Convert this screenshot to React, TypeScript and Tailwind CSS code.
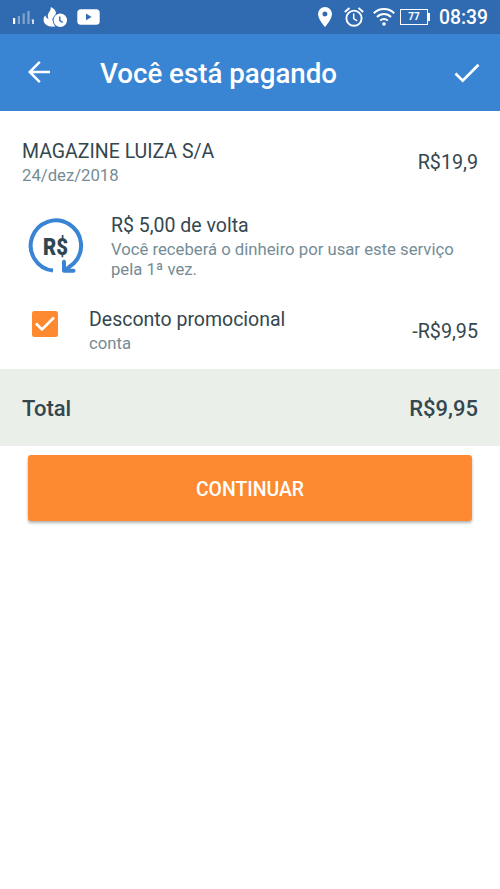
import type { ReactNode } from "react";

function SignalIcon() {
  return (
    <svg width="22" height="16" viewBox="0 0 22 16" fill="#fff">
      <rect x="0" y="9" width="2.2" height="6" />
      <rect x="4.8" y="7" width="2.2" height="8" opacity="0.4" />
      <rect x="9.6" y="4.5" width="2.2" height="10.5" opacity="0.4" />
      <rect x="14.4" y="2" width="2.2" height="13" opacity="0.4" />
      <path d="M18.7 10.4h2.1V15h-1.5v-3.2h-.6z" />
    </svg>
  );
}

function FlameClockIcon() {
  return (
    <svg width="26" height="22" viewBox="0 0 26 22">
      <path
        d="M7.8.9c3.600 1.800 5.800 4.300 5 7.400-.6 2.300-3.400 3.300-3.700 5.700 1.800-.4 3-1.600 3.800-3l3.500-1.100L13.400 20C8 21.900 1.400 19.900.6 14.500c-.3-2.500.6-4.300 1.900-5.100.3 2 1.500 3 3 3.600C4.500 10.500 4.500 8.800 5.800 6.600 7 4.700 8 3 7.800.9z"
        fill="#fff"
      />
      <circle cx="17.300" cy="14.300" r="7.600" fill="#306ab0" />
      <circle cx="17.300" cy="14.300" r="6.700" fill="#fff" />
      <path d="M16.800 10.500v4l2.800 1.800" fill="none" stroke="#306ab0" strokeWidth="1.400" />
    </svg>
  );
}

function YoutubeIcon() {
  return (
    <svg width="23" height="16" viewBox="0 0 23 16">
      <rect x="0.3" y="0.3" width="22.4" height="15.4" rx="3.5" fill="#fff" />
      <path d="M9 4.600v6.600l5.600-3.300z" fill="#306ab0" />
    </svg>
  );
}

function PinIcon() {
  return (
    <svg width="14" height="20" viewBox="0 0 14 20">
      <path
        d="M7 0a7 7 0 0 0-7 7c0 5.200 7 13 7 13s7-7.800 7-13a7 7 0 0 0-7-7zm0 9.500a2.500 2.500 0 1 1 0-5 2.500 2.500 0 0 1 0 5z"
        fill="#fff"
      />
    </svg>
  );
}

function AlarmIcon() {
  return (
    <svg width="20" height="20" viewBox="0 0 20 20" fill="none" stroke="#fff">
      <circle cx="10" cy="11.2" r="7.6" strokeWidth="1.9" />
      <path d="M.8 4.900 5.500 1M19.200 4.900 14.500 1" strokeWidth="1.9" />
      <path d="M9.700 6.500v5.200l3.500 2.200" strokeWidth="1.5" />
    </svg>
  );
}

function WifiIcon() {
  return (
    <svg width="22" height="18" viewBox="0 0 22 18" fill="none" stroke="#fff" strokeWidth="2">
      <path d="M.8 5.300a14.500 14.500 0 0 1 20.400 0M4 9a9.900 9.900 0 0 1 14 0M7.200 12.600a5.400 5.400 0 0 1 7.600 0" />
      <circle cx="11" cy="16" r="1.8" fill="#fff" stroke="none" />
    </svg>
  );
}

function Battery({ level }: { level: number }) {
  return (
    <div className="flex items-center">
      <div className="flex h-4 w-7 items-center justify-center border border-white text-[10px] leading-none font-bold">
        {level}
      </div>
      <div className="h-2 w-[2px] bg-white" />
    </div>
  );
}

function StatusBar() {
  return (
    <div className="flex h-[34px] items-center bg-[#306ab0] pl-[13px] text-white">
      <SignalIcon />
      <div className="ml-2">
        <FlameClockIcon />
      </div>
      <div className="ml-2">
        <YoutubeIcon />
      </div>
      <div className="ml-auto flex items-center pr-3">
        <PinIcon />
        <div className="ml-3">
          <AlarmIcon />
        </div>
        <div className="ml-[9px]">
          <WifiIcon />
        </div>
        <div className="ml-[5px]">
          <Battery level={77} />
        </div>
        <span className="ml-[9px] pt-px text-[19.3px] leading-none font-medium">08:39</span>
      </div>
    </div>
  );
}

function Header() {
  return (
    <header className="flex h-[77px] items-center bg-[#3985d3] pr-5 pl-7 text-white">
      <svg width="22" height="22" viewBox="0 0 22 22" fill="none" stroke="#fff" strokeWidth="2.5" className="-mt-[2px]">
        <path d="M22 11H2M11.800.9 1.700 11l10.100 10.100" />
      </svg>
      <h1 className="ml-[50px] pt-[2px] text-[27.7px] leading-none font-medium">Você está pagando</h1>
      <svg width="26" height="20" viewBox="0 0 26 20" fill="none" stroke="#fff" strokeWidth="2.7" className="ml-auto">
        <path d="m1.500 10.500 7.200 7.100L24.500 1.800" />
      </svg>
    </header>
  );
}

function CashbackIcon() {
  return (
    <svg width="56" height="56" viewBox="0 0 56 56">
      <path d="M25 52.600A25.200 25.200 0 1 1 45.800 45.300L38 51.500" fill="none" stroke="#3985d3" strokeWidth="4" />
      <path d="M36 43.800v9H45.500" fill="none" stroke="#3985d3" strokeWidth="4" strokeLinecap="round" strokeLinejoin="round" />
      <text
        x="15"
        y="37"
        textLength="25"
        lengthAdjust="spacingAndGlyphs"
        fontSize="24.5"
        fontWeight="900"
        fill="#2f4650"
      >
        R$
      </text>
    </svg>
  );
}

function Checkbox() {
  return (
    <svg width="26" height="26" viewBox="0 0 26 26">
      <rect width="26" height="26" rx="2.5" fill="#fd8a31" />
      <path d="m4 12.500 6 6L22 6.500" fill="none" stroke="#fff" strokeWidth="2.6" />
    </svg>
  );
}

function RowText({ title, children }: { title: string; children: ReactNode }) {
  return (
    <div className="pt-px">
      <p className="text-[19.5px] leading-6 text-[#34474f]">{title}</p>
      <p className="mt-[2px] text-[16.7px] leading-5 text-[#758c96]">{children}</p>
    </div>
  );
}

export default function App() {
  return (
    <main className="min-h-[889px] w-full bg-white font-['Roboto',sans-serif]">
      <StatusBar />
      <Header />

      <section className="h-[258px] pr-[22px]">
        <div className="flex items-start justify-between pt-7 pl-[22px]">
          <RowText title="MAGAZINE LUIZA S/A">24/dez/2018</RowText>
          <span className="mt-3 text-[19.7px] leading-6 text-[#34474f]">R$19,9</span>
        </div>

        <div className="mt-[27px] flex items-start pl-7">
          <div className="mt-[5px] mr-[27px]">
            <CashbackIcon />
          </div>
          <RowText title="R$ 5,00 de volta">
            Você receberá o dinheiro por usar este serviço
            <br />
            pela 1ª vez.
          </RowText>
        </div>

        <div className="mt-[27px] flex items-start pl-8">
          <div className="mt-[4px] mr-[31px]">
            <Checkbox />
          </div>
          <RowText title="Desconto promocional">conta</RowText>
          <span className="mt-[13px] ml-auto text-[19.7px] leading-6 text-[#34474f]">-R$9,95</span>
        </div>
      </section>

      <section className="flex h-[77px] items-center justify-between bg-[#ebefea] px-[22px] pt-[2px] text-[22px] font-medium text-[#34474f]">
        <span>Total</span>
        <span>R$9,95</span>
      </section>

      <div className="px-7 pt-[9px]">
        <button className="h-[66px] w-full rounded-[3px] bg-[#fd8a31] pt-[3px] text-[19.4px] font-medium text-white shadow-[0_2px_3px_rgba(0,0,0,0.3)]">
          CONTINUAR
        </button>
      </div>
    </main>
  );
}
